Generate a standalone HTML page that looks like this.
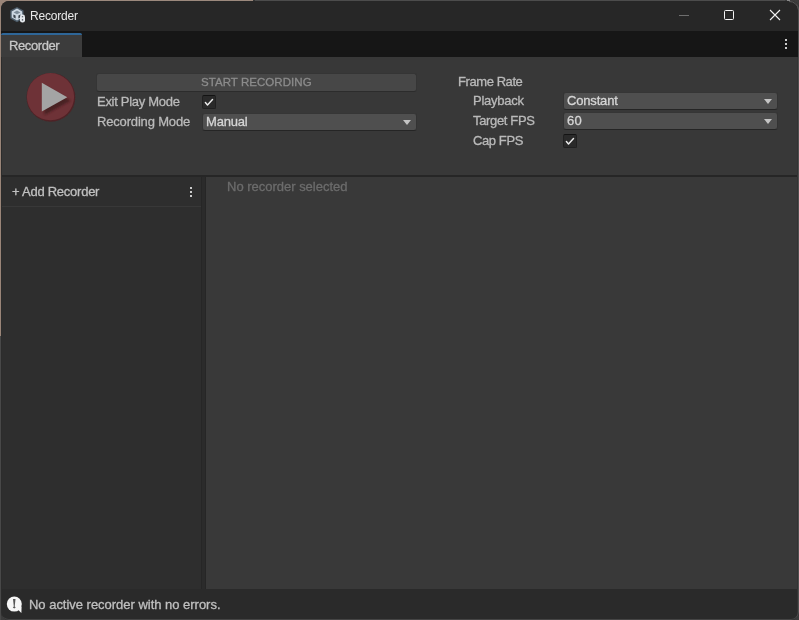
<!DOCTYPE html>
<html><head><meta charset="utf-8">
<style>
*{margin:0;padding:0;box-sizing:border-box}
html,body{width:799px;height:620px;overflow:hidden;background:#3c3c3c}
body{position:relative;font-family:"Liberation Sans",sans-serif;font-size:12px;color:#bababa}
.a{position:absolute}
#win{left:0;top:0;width:799px;height:620px;clip-path:inset(1px 0 0 1px round 8px);background:#272727}
.t{position:absolute;white-space:nowrap;line-height:14px;will-change:transform;-webkit-text-stroke:0.3px currentColor;font-size:13px;filter:blur(0.35px)}.tt{font-size:12px;filter:none}
.btn{position:absolute;background:#474747;border-radius:3px;border:1px solid #353535;border-bottom-color:#2c2c2c}
.dd{position:absolute;background:#4f4f4f;border-radius:3px;border:1px solid #333;border-top-color:#363636;border-bottom-color:#252525}
.arrow{position:absolute;width:0;height:0;border-left:4px solid transparent;border-right:4px solid transparent;border-top:5px solid #c4c4c4}
.cb{position:absolute;width:14px;height:14px;background:#2a2a2a;border:1px solid #202020;border-top-color:#131313;border-radius:2px}
.dots{position:absolute;width:2px;height:10px}
.dots i{position:absolute;left:0;width:2px;height:2px;background:#cccccc}
</style></head><body>
<!-- desktop -->
<div class="a" style="left:254px;top:0;width:531px;height:1px;background:#4c4c4c"></div>
<div class="a" style="left:253px;top:0;width:2px;height:1px;background:#343434"></div>
<div class="a" style="left:0;top:0;width:253px;height:12px;background:#9c897d"></div>
<div class="a" style="left:0;top:0;width:12px;height:336px;background:#9a8578"></div>
<div class="a" style="left:0;top:336px;width:1px;height:284px;background:#484848"></div>
<div class="a" style="left:787px;top:0;width:3px;height:1px;background:#8a8a8a"></div>

<div class="a" id="win">
  <div class="a" style="left:0;top:0;width:799px;height:31px;background:#272727"></div>
  <div class="a" style="left:0;top:31px;width:799px;height:26px;background:#161616"></div>
  <div class="a" style="left:1px;top:33px;width:81px;height:24px;background:#3c3c3c;border-radius:3px 3px 0 0"></div>
  <div class="a" style="left:1px;top:33px;width:81px;height:2px;background:#2e6698;border-radius:3px 3px 0 0"></div>
  <div class="a" style="left:0;top:57px;width:799px;height:118px;background:#383838"></div>
  <div class="a" style="left:0;top:175px;width:799px;height:2px;background:#262626"></div>
  <div class="a" style="left:0;top:177px;width:201px;height:412px;background:#2e2e2e"></div>
  <div class="a" style="left:201px;top:177px;width:1px;height:412px;background:#262626"></div>
  <div class="a" style="left:202px;top:177px;width:3px;height:412px;background:#2b2b2b"></div>
  <div class="a" style="left:205px;top:177px;width:1px;height:412px;background:#262626"></div>
  <div class="a" style="left:206px;top:177px;width:593px;height:412px;background:#393939"></div>
  <div class="a" style="left:1px;top:206px;width:200px;height:1px;background:#383838"></div>
  <div class="a" style="left:0;top:589px;width:799px;height:31px;background:#2a2a2a"></div>
  <div class="a" style="left:1px;top:57px;width:1px;height:563px;background:#2c2c2c"></div>
  <div class="a" style="left:797px;top:57px;width:1px;height:563px;background:#333"></div>
</div>
<div class="a" style="left:1px;top:1px;width:798px;height:619px;border-right:1px solid #505050;border-bottom:1px solid #454545;border-radius:8px"></div>
<svg class="a" style="left:787px;top:0" width="12" height="12" viewBox="0 0 12 12"><path d="M2 1.5 A9 9 0 0 1 11.5 10" fill="none" stroke="#5a5a5a" stroke-width="1"/></svg>

<!-- title bar content -->
<svg class="a" style="left:9px;top:6px" width="18" height="18" viewBox="0 0 18 18">
  <path d="M8 1 L14.5 4.6 L14.5 12.4 L8 16.2 L1.3 12.4 L1.3 4.6 Z" fill="#4e5d6a"/>
  <path d="M8 2.6 L13.2 5.5 L13.2 11.6 L8 14.6 L2.7 11.6 L2.7 5.5 Z" fill="#cdd8e3"/>
  <path d="M8 4.6 L11.4 6.4 L8 8.2 L4.6 6.4 Z" fill="#7d8c99"/>
  <path d="M4.4 8.4 L6.6 9.6 L6.6 12.4 L4.4 11.2 Z" fill="#3a444d"/>
  <path d="M11.6 8.4 L9.4 9.6 L9.4 12.4 L11.6 11.2 Z" fill="#3a444d"/>
  <rect x="11" y="8.6" width="5" height="8" rx="2.3" fill="#e4e8ec"/>
  <path d="M13.5 10.3 L13.5 11.3 M13.5 13.3 L13.5 14.6" stroke="#3c444c" stroke-width="1.3"/>
</svg>
<div class="t tt" style="left:30px;top:9px;color:#e8e8e8;letter-spacing:-0.2px;-webkit-text-stroke:0">Recorder</div>
<div class="a" style="left:679px;top:15px;width:10px;height:1px;background:#6e6e6e"></div>
<div class="a" style="left:724px;top:10px;width:10px;height:10px;border:1px solid #f4f4f4;border-radius:1.5px"></div>
<svg class="a" style="left:769px;top:9px" width="12" height="12" viewBox="0 0 12 12"><path d="M1 1 L11 11 M11 1 L1 11" stroke="#f2f2f2" stroke-width="1.1"/></svg>

<!-- tab -->
<div class="t" style="left:9px;top:39px;color:#c8c8c8;letter-spacing:-0.4px">Recorder</div>
<div class="dots" style="left:785px;top:39px"><i style="top:0"></i><i style="top:4px"></i><i style="top:8px"></i></div>

<!-- record button -->
<svg class="a" style="left:25px;top:71px" width="52" height="52" viewBox="0 0 52 52">
  <defs><filter id="sh" x="-30%" y="-30%" width="160%" height="160%"><feGaussianBlur stdDeviation="1.3"/></filter>
  <filter id="sh2" x="-10%" y="-10%" width="120%" height="120%"><feGaussianBlur stdDeviation="0.6"/></filter></defs>
  <circle cx="25.9" cy="26.3" r="24.4" fill="#4f2226" filter="url(#sh2)"/>
  <circle cx="25.5" cy="25.7" r="23.6" fill="#6e3237"/>
  <path d="M18.3 13.6 L44.3 28.2 L18.3 42.4 Z" fill="#3c1a1d" opacity="0.75" filter="url(#sh)" transform="translate(1.2,1.6)"/>
  <path d="M16.8 11.8 L42.3 26.2 L16.8 40.6 Z" fill="#a4a4a4"/>
</svg>

<div class="btn" style="left:96px;top:73px;width:321px;height:19px"></div>
<div class="t" style="left:201px;top:75px;color:#8c8c8c;letter-spacing:0.05px;font-size:11.5px">START RECORDING</div>
<div class="t" style="left:97px;top:95px;letter-spacing:-0.29px">Exit Play Mode</div>
<div class="cb" style="left:202px;top:95px"></div>
<svg class="a" style="left:202px;top:95px" width="14" height="14" viewBox="0 0 14 14"><path d="M3.4 7.5 L5.5 9.9 L10.5 4.5" fill="none" stroke="#ececec" stroke-width="1.45" stroke-linecap="round" stroke-linejoin="round"/></svg>
<div class="t" style="left:97px;top:115px;letter-spacing:-0.17px">Recording Mode</div>
<div class="dd" style="left:202px;top:113px;width:215px;height:18px"></div>
<div class="t" style="left:206px;top:115px;color:#d6d6d6;letter-spacing:-0.2px">Manual</div>
<div class="arrow" style="left:403px;top:120px"></div>

<div class="t" style="left:458px;top:75px;letter-spacing:-0.42px">Frame Rate</div>
<div class="t" style="left:473px;top:94px;letter-spacing:-0.24px">Playback</div>
<div class="t" style="left:473px;top:114px;letter-spacing:-0.35px">Target FPS</div>
<div class="t" style="left:473px;top:134px;letter-spacing:-0.4px">Cap FPS</div>
<div class="dd" style="left:563px;top:92px;width:215px;height:18px"></div>
<div class="t" style="left:567px;top:94px;color:#d6d6d6;letter-spacing:-0.17px">Constant</div>
<div class="arrow" style="left:764px;top:99px"></div>
<div class="dd" style="left:563px;top:112px;width:215px;height:18px"></div>
<div class="t" style="left:567px;top:114px;color:#d6d6d6;letter-spacing:0.2px">60</div>
<div class="arrow" style="left:764px;top:119px"></div>
<div class="cb" style="left:563px;top:134px"></div>
<svg class="a" style="left:563px;top:134px" width="14" height="14" viewBox="0 0 14 14"><path d="M3.4 7.5 L5.5 9.9 L10.5 4.5" fill="none" stroke="#ececec" stroke-width="1.45" stroke-linecap="round" stroke-linejoin="round"/></svg>

<!-- left panel -->
<div class="t" style="left:12px;top:185px;color:#c0c0c0;letter-spacing:-0.25px">+ Add Recorder</div>
<div class="dots" style="left:190px;top:187px"><i style="top:0"></i><i style="top:4px"></i><i style="top:8px"></i></div>

<div class="t" style="left:227px;top:180px;color:#6c6c6c;letter-spacing:-0.01px">No recorder selected</div>

<!-- statusbar -->
<svg class="a" style="left:4px;top:594px" width="22" height="22" viewBox="0 0 22 22">
  <circle cx="10.3" cy="10.1" r="7.5" fill="#f6f6f6"/>
  <path d="M13.2 15 L17.4 19 L17.6 12.5 Z" fill="#f6f6f6"/>
  <path d="M9 5 L11.5 5 L10.7 12.6 L11.7 13.6 L10.25 14.6 L8.8 13.6 L9.8 12.6 Z" fill="#555"/>
</svg>
<div class="t" style="left:29px;top:598px;color:#c0c0c0;letter-spacing:-0.02px">No active recorder with no errors.</div>
</body></html>
